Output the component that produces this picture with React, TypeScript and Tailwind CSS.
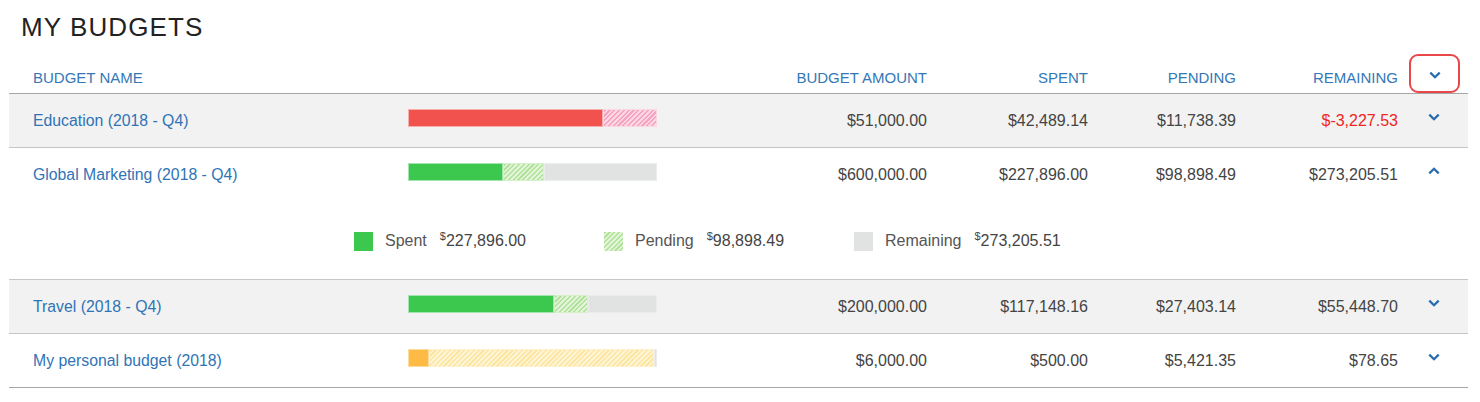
import * as React from "react";

type Tone = "red" | "green" | "orange";

type Budget = {
  id: string;
  name: string;
  budget: number;
  spent: number;
  pending: number;
  tone: Tone;
  amount: string;
  spentText: string;
  pendingText: string;
  remainingText: string;
  over?: boolean;
  open?: boolean;
};

const budgets: Budget[] = [
  {
    id: "edu",
    name: "Education (2018 - Q4)",
    budget: 51000,
    spent: 42489.14,
    pending: 11738.39,
    tone: "red",
    amount: "$51,000.00",
    spentText: "$42,489.14",
    pendingText: "$11,738.39",
    remainingText: "$-3,227.53",
    over: true,
  },
  {
    id: "mkt",
    name: "Global Marketing (2018 - Q4)",
    budget: 600000,
    spent: 227896,
    pending: 98898.49,
    tone: "green",
    amount: "$600,000.00",
    spentText: "$227,896.00",
    pendingText: "$98,898.49",
    remainingText: "$273,205.51",
    open: true,
  },
  {
    id: "trv",
    name: "Travel (2018 - Q4)",
    budget: 200000,
    spent: 117148.16,
    pending: 27403.14,
    tone: "green",
    amount: "$200,000.00",
    spentText: "$117,148.16",
    pendingText: "$27,403.14",
    remainingText: "$55,448.70",
  },
  {
    id: "own",
    name: "My personal budget (2018)",
    budget: 6000,
    spent: 500,
    pending: 5421.35,
    tone: "orange",
    amount: "$6,000.00",
    spentText: "$500.00",
    pendingText: "$5,421.35",
    remainingText: "$78.65",
  },
];

const tones: Record<Tone, { spent: string; pending: string }> = {
  red: {
    spent: "bg-[#f2524d] border-[#f8aeac]",
    pending:
      "border-[#fbd6e3] bg-[image:repeating-linear-gradient(135deg,#f5a3c0_0px,#f5a3c0_1.6px,#fbd6e3_1.6px,#fbd6e3_3.4px)]",
  },
  green: {
    spent: "bg-[#3cc84f] border-[#a6e4ad]",
    pending:
      "border-[#d6f0ca] bg-[image:repeating-linear-gradient(135deg,#b3e29d_0px,#b3e29d_1.6px,#e1f4d8_1.6px,#e1f4d8_3.4px)]",
  },
  orange: {
    spent: "bg-[#fdbb45] border-[#fddc9f]",
    pending:
      "border-[#fdf1c9] bg-[image:repeating-linear-gradient(135deg,#fce6a2_0px,#fce6a2_1.6px,#fef5d6_1.6px,#fef5d6_3.4px)]",
  },
};

const cols = "grid grid-cols-[399px_249px_270px_161px_148px_162px_70px]";

function Chevron({ up = false }: { up?: boolean }) {
  return (
    <svg width="12" height="8" viewBox="0 0 12 8" className="text-[#2a6cb0]">
      <polyline
        points={up ? "1.3,6.4 6,1.8 10.7,6.4" : "1.3,1.6 6,6.2 10.7,1.6"}
        fill="none"
        stroke="currentColor"
        strokeWidth="2.3"
      />
    </svg>
  );
}

function BudgetBar({ b }: { b: Budget }) {
  const total = Math.max(b.budget, b.spent + b.pending);
  const rest = Math.max(0, b.budget - b.spent - b.pending);
  const t = tones[b.tone];
  return (
    <div className="mb-[6px] flex h-[18px] w-[249px]">
      <div className={`h-full border ${t.spent}`} style={{ width: `${(b.spent / total) * 100}%` }} />
      <div className={`h-full border ${t.pending}`} style={{ width: `${(b.pending / total) * 100}%` }} />
      {rest > 0 && (
        <div
          className="h-full border border-[#ececec] bg-[#e1e3e2]"
          style={{ width: `${(rest / total) * 100}%` }}
        />
      )}
    </div>
  );
}

function LegendItem({ swatch, label, value }: { swatch: string; label: string; value: string }) {
  return (
    <div className="flex w-[250px] items-center">
      <span className={`h-[19px] w-[19px] ${swatch}`} />
      <span className="ml-[12px] text-[16px] text-[#555]">{label}</span>
      <span className="ml-[13px] text-[16px] text-[#444]">
        <span className="align-top text-[11px] leading-[14px]">$</span>
        {value}
      </span>
    </div>
  );
}

function Row({ b, shaded }: { b: Budget; shaded: boolean }) {
  return (
    <div className={`border-b border-[#c6c6c6] ${shaded ? "bg-[#f2f2f2]" : "bg-white"}`}>
      <div className={`${cols} h-[53px] items-center text-[16px]`}>
        <div className="pl-[24px] text-[15.8px] text-[#2f74b5]">{b.name}</div>
        <BudgetBar b={b} />
        <div className="text-right text-[#444]">{b.amount}</div>
        <div className="text-right text-[#444]">{b.spentText}</div>
        <div className="text-right text-[#444]">{b.pendingText}</div>
        <div className={`text-right ${b.over ? "text-[#f0251f]" : "text-[#444]"}`}>{b.remainingText}</div>
        <div className="mb-[7px] flex justify-center pl-[2px]">
          <Chevron up={b.open} />
        </div>
      </div>
      {b.open && (
        <div className="flex h-[78px] items-center pl-[345px] pt-[2px]">
          <LegendItem swatch="bg-[#3cc84f]" label="Spent" value="227,896.00" />
          <LegendItem
            swatch="bg-[image:repeating-linear-gradient(135deg,#b3e29d_0px,#b3e29d_1.6px,#e1f4d8_1.6px,#e1f4d8_3.4px)]"
            label="Pending"
            value="98,898.49"
          />
          <LegendItem swatch="bg-[#e1e3e2]" label="Remaining" value="273,205.51" />
        </div>
      )}
    </div>
  );
}

export default function App() {
  return (
    <div className="min-h-[402px] bg-white pl-[9px] pr-[12px] font-['Liberation_Sans',Arial,sans-serif]">
      <h1 className="ml-[12px] pt-[12px] text-[26px] leading-[30px] font-normal tracking-[1.1px] text-[#222]">
        MY BUDGETS
      </h1>

      <div className={`${cols} h-[52px] items-end border-b border-[#a6a6a6] text-[15px] leading-[18px] text-[#3378b7]`}>
        <div className="pb-[6px] pl-[24px]">BUDGET NAME</div>
        <div />
        <div className="pb-[6px] text-right">BUDGET AMOUNT</div>
        <div className="pb-[6px] text-right">SPENT</div>
        <div className="pb-[6px] text-right">PENDING</div>
        <div className="pb-[6px] text-right">REMAINING</div>
        <div className="flex justify-center pl-[3px]">
          <button
            type="button"
            className="flex h-[39px] w-[51px] items-center justify-center rounded-[9px] border-2 border-[#e9484b] pt-[3px]"
          >
            <Chevron />
          </button>
        </div>
      </div>

      {budgets.map((b, i) => (
        <Row key={b.id} b={b} shaded={i % 2 === 0} />
      ))}
      <div className="-mt-px h-px bg-[#a6a6a6]" />
    </div>
  );
}
